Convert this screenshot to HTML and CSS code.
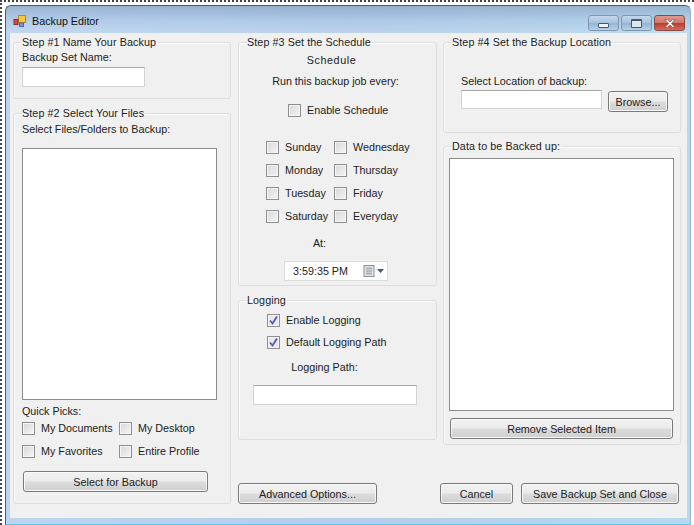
FILE: index.html
```html
<!DOCTYPE html>
<html lang="en">
<head>
<meta charset="utf-8">
<title>Backup Editor</title>
<link rel="stylesheet" href="styles.css">
</head>
<body>
<div class="window">
  <header class="titlebar">
    <svg class="app-icon" width="15" height="14" viewBox="0 0 15 14">
      <rect x="5.500" y="1.500" width="7" height="7" fill="#f4c840" stroke="#b8862a"/>
      <rect x="1" y="5.500" width="4" height="5" fill="#e04a30" stroke="#90302a"/>
      <rect x="6.500" y="9" width="4" height="3.500" fill="#6a9ae0" stroke="#4a6ab0"/>
    </svg>
    <span class="title">Backup Editor</span>
    <div class="controls">
      <div class="ctl"><span class="glyph-min"></span></div>
      <div class="ctl"><span class="glyph-max"></span></div>
      <div class="ctl close"><svg width="14" height="11" viewBox="0 0 14 11"><path d="M2 1.500h2.500L7 4l2.500-2.500H12L8.500 5.500 12 9.500H9.500L7 7 4.500 9.500H2l3.500-4z" fill="#fff" stroke="#7a3a34" stroke-width=".6"/></svg></div>
    </div>
  </header>
  <main class="client">
    <div class="col col1">
      <fieldset class="group g1">
        <legend>Step #1 Name Your Backup</legend>
        <div class="label">Backup Set Name:</div>
        <div class="input w-name"></div>
      </fieldset>
      <fieldset class="group g2">
        <legend>Step #2 Select Your Files</legend>
        <div class="label">Select Files/Folders to Backup:</div>
        <div class="list l-files"></div>
        <div class="label quick">Quick Picks:</div>
        <div class="picks">
          <label class="check"><i class="box"></i>My Documents</label>
          <label class="check"><i class="box"></i>My Desktop</label>
          <label class="check"><i class="box"></i>My Favorites</label>
          <label class="check"><i class="box"></i>Entire Profile</label>
        </div>
        <div class="btn b-select">Select for Backup</div>
      </fieldset>
    </div>
    <div class="col col2">
      <fieldset class="group g3">
        <legend>Step #3 Set the Schedule</legend>
        <div class="center sched">Schedule</div>
        <div class="center run">Run this backup job every:</div>
        <label class="check enable"><i class="box"></i>Enable Schedule</label>
        <div class="days">
          <label class="check"><i class="box"></i>Sunday</label>
          <label class="check"><i class="box"></i>Wednesday</label>
          <label class="check"><i class="box"></i>Monday</label>
          <label class="check"><i class="box"></i>Thursday</label>
          <label class="check"><i class="box"></i>Tuesday</label>
          <label class="check"><i class="box"></i>Friday</label>
          <label class="check"><i class="box"></i>Saturday</label>
          <label class="check"><i class="box"></i>Everyday</label>
        </div>
        <div class="center at">At:</div>
        <div class="timepicker">
          <span>3:59:35 PM</span>
          <svg width="24" height="14" viewBox="0 0 24 14">
            <rect x="1" y="1.500" width="10" height="11" fill="#dfe3e8" stroke="#8a8f98"/>
            <path d="M3 4.500h6M3 7h6M3 9.500h6M4 3v8M6 3v8M8 3v8" stroke="#9aa0a8" stroke-width=".7"/>
            <path d="M14 5h7l-3.500 4z" fill="#4a5a78"/>
          </svg>
        </div>
      </fieldset>
      <fieldset class="group g-log">
        <legend>Logging</legend>
        <label class="check log1"><i class="box on"><svg width="11" height="11" viewBox="0 0 11 11"><path d="M2 5.500l2.500 3L9 1.500" fill="none" stroke="#5a5aa8" stroke-width="1.800"/></svg></i>Enable Logging</label>
        <label class="check log2"><i class="box on"><svg width="11" height="11" viewBox="0 0 11 11"><path d="M2 5.500l2.500 3L9 1.500" fill="none" stroke="#5a5aa8" stroke-width="1.800"/></svg></i>Default Logging Path</label>
        <div class="center path">Logging Path:</div>
        <div class="input w-path"></div>
      </fieldset>
      <div class="footer"><div class="btn b-adv">Advanced Options...</div></div>
    </div>
    <div class="col col3">
      <fieldset class="group g4">
        <legend>Step #4 Set the Backup Location</legend>
        <div class="label loc">Select Location of backup:</div>
        <div class="row">
          <div class="input w-loc"></div>
          <div class="btn b-browse">Browse...</div>
        </div>
      </fieldset>
      <fieldset class="group g5">
        <legend>Data to be Backed up:</legend>
        <div class="list l-data"></div>
        <div class="btn b-remove">Remove Selected Item</div>
      </fieldset>
      <div class="footer actions">
        <div class="btn b-cancel">Cancel</div>
        <div class="btn b-save">Save Backup Set and Close</div>
      </div>
    </div>
  </main>
</div>
</body>
</html>
```
FILE: styles.css
```css
* { box-sizing: border-box; }
html, body { margin: 0; height: 100%; }
body {
  width: 694px; height: 525px; overflow: hidden; background: #fff;
  font: 10.75px "Liberation Sans", Arial, sans-serif; color: #222;
  padding: 3px 3px 0 3px;
  border-top: 2px dotted #444; border-left: 2px dotted #444;
}
.window {
  height: 520px; display: flex; flex-direction: column;
  padding: 0 3px 6px 4px;
  border: 1px solid #4a5a6a; border-bottom-color: #5fc8e8; border-right-color: #9ab8cc;
  border-radius: 6px 6px 0 0;
  background: linear-gradient(90deg, #bcd4f0 0, #b4cdea 50%, #b8d8ee 100%);
}
.titlebar {
  height: 27px; flex: none; display: flex; align-items: center;
  padding-top: 3px;
  margin: 0 -3px 0 -4px; padding-left: 4px; padding-right: 3px;
  background: linear-gradient(180deg, rgba(110,140,170,.45), rgba(150,180,210,.2) 55%, rgba(255,255,255,.1));
}
.app-icon { margin-left: 3px; flex: none; }
.title { margin-left: 4px; color: #111; }
.controls { margin-left: auto; display: flex; gap: 2px; align-self: flex-start; margin-top: 6px; margin-right: 2px; }
.ctl {
  width: 31px; height: 16px; border: 1px solid #7f95ad; border-radius: 3px;
  background: linear-gradient(#c4d8ec 0, #a8c2dc 48%, #94b4d2 52%, #b4d2e8 100%);
  display: flex; align-items: center; justify-content: center;
}
.ctl.close { border-color: #8a4a44; background: linear-gradient(#dc9a8e 0, #d07868 48%, #bb3c2c 52%, #d86c5c 100%); }
.glyph-min { width: 11px; height: 5px; margin-top: 5px; background: #eef2f6; border: 1px solid #45586e; border-radius: 1px; }
.glyph-max { width: 11px; height: 9px; background: #dce6ef; border: 1px solid #45586e; border-top-width: 2px; border-radius: 1px; }
.client {
  flex: 1; background: #f0f0f0; display: flex;
  padding: 2px 6px 0 3px; gap: 7px; min-height: 0;
}
.col { display: flex; flex-direction: column; flex: none; }
.col1 { width: 218px; }
.col2 { width: 199px; }
.col3 { width: 238px; margin-left: -1px; }
.group {
  margin: 0; padding: 0 8px; min-width: 0;
  border: 1px solid #dedede; border-radius: 3px;
  box-shadow: inset 1px 1px 0 #fbfbfb;
}
.group legend { padding: 0 1px 0 0; margin-left: 0; line-height: 14px; letter-spacing: .08px; }
.label { line-height: 14px; }
.center { text-align: center; line-height: 14px; }
.g1 { height: 64px; }
.g1 .label { margin-top: 1px; }
.w-name { width: 123px; margin-top: 3px; }
.g2 { height: 398px; margin-top: 7px; }
.input { height: 20px; background: #fff; border: 1px solid #d4d4d4; border-top-color: #a8a8a8; }
.list { background: #fff; border: 1px solid #8c8c8c; }
.l-files { width: 195px; height: 252px; margin-top: 12px; }
.g2 .label:first-of-type { margin-top: 2px; }
.quick { margin-top: 4px; }
.check { display: flex; align-items: center; line-height: 14px; white-space: nowrap; }
.box {
  width: 13px; height: 13px; flex: none; margin-right: 6px;
  border: 1px solid #8e8f8f;
  background: linear-gradient(135deg, #d8d8d8, #f4f4f4);
  box-shadow: inset 0 0 0 1px #f4f4f4;
  display: flex; align-items: center; justify-content: center;
}
.box.on { background: #e8e8f0; }
.picks { display: grid; grid-template-columns: 97px auto; row-gap: 9px; margin-top: 3px; }
.btn {
  display: flex; align-items: center; justify-content: center; height: 21px; white-space: nowrap;
  border: 1px solid #7a7a7a; border-radius: 3px;
  background: linear-gradient(#f2f2f2 0, #ebebeb 48%, #dcdcdc 52%, #cfcfcf 100%);
  box-shadow: inset 0 0 0 1px #f8f8f8;
}
.b-select { width: 185px; margin-top: 13px; margin-left: 1px; }
.g3 { height: 251px; }
.sched { margin-top: 4px; letter-spacing: .6px; padding-right: 12px; }
.run { margin-top: 7px; padding-right: 4px; }
.enable { margin: 15px 0 0 41px; }
.days { display: grid; grid-template-columns: 68px auto; row-gap: 9px; margin: 23px 0 0 19px; }
.at { margin-top: 13px; padding-right: 36px; }
.timepicker {
  width: 104px; height: 20px; margin: 11px 0 0 37px; background: #fff;
  border: 1px solid #dcdcdc; display: flex; align-items: center; justify-content: space-between; padding: 0 0 0 8px;
}
.g-log { height: 147px; margin-top: 7px; }
.log1 { margin: 6px 0 0 20px; }
.log2 { margin: 8px 0 0 20px; }
.log1 .box, .log2 .box { margin-right: 6px; }
.path { margin-top: 11px; padding-right: 26px; }
.w-path { width: 164px; margin: 11px 0 0 6px; }
.footer { margin-top: auto; margin-bottom: 14px; }
.b-adv { width: 139px; }
.g4 { height: 98px; }
.loc { margin: 25px 0 0 9px; }
.row { display: flex; align-items: flex-start; gap: 6px; margin: 2px 0 0 9px; }
.w-loc { width: 141px; height: 19px; }
.b-browse { width: 60px; margin-top: 1px; }
.g5 { height: 306px; margin-top: 6px; }
.l-data { width: 225px; height: 253px; margin: 5px 0 0 -3px; }
.b-remove { width: 223px; margin: 7px 0 0 -2px; }
.actions { display: flex; margin-left: -3px; gap: 8px; }
.b-cancel { width: 73px; }
.b-save { width: 158px; }
```
